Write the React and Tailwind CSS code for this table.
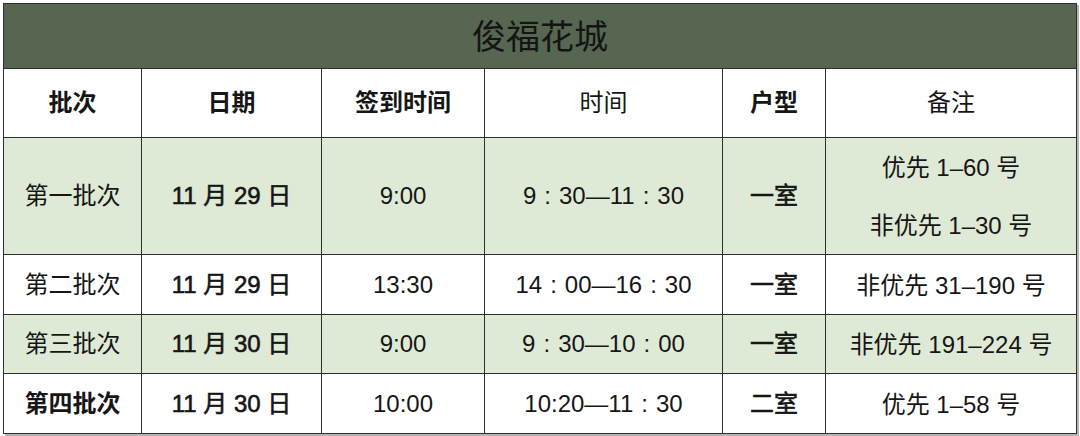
const rows = [
  {
    batch: "第一批次",
    date: "11 月 29 日",
    checkin: "9:00",
    time: "9：30—11：30",
    room: "一室",
    note: ["优先 1–60 号", "非优先 1–30 号"],
    green: true,
    h: "h-[117px]",
  },
  {
    batch: "第二批次",
    date: "11 月 29 日",
    checkin: "13:30",
    time: "14：00—16：30",
    room: "一室",
    note: ["非优先 31–190 号"],
    h: "h-[60px]",
  },
  {
    batch: "第三批次",
    date: "11 月 30 日",
    checkin: "9:00",
    time: "9：30—10：00",
    room: "一室",
    note: ["非优先 191–224 号"],
    green: true,
    h: "h-[59px]",
  },
  {
    batch: "第四批次",
    date: "11 月 30 日",
    checkin: "10:00",
    time: "10:20—11：30",
    room: "二室",
    note: ["优先 1–58 号"],
    bold: true,
    h: "h-[60px]",
  },
];

const cell = "border border-[#2e2e2e] text-center align-middle p-0";
const medium = "[-webkit-text-stroke:0.6px_#161616]";

// full-width colon drawn as a spaced-out ascii colon
const TimeText = ({ text }) => {
  const parts = text.split("：");
  return (
    <>
      {parts.map((p, i) => (
        <span key={i}>
          {i > 0 && <span className="mx-[8px]">:</span>}
          {p}
        </span>
      ))}
    </>
  );
};

export default function App() {
  return (
    <div
      className="w-[1080px] h-[436px] bg-white pt-[3px] pl-[3px] text-[#161616]"
      style={{ fontFamily: '"Liberation Sans", "Noto Sans CJK SC", sans-serif' }}
    >
      <table className="border-collapse table-fixed w-[1073px] shadow-[2px_2px_0_#b4b4b4] text-[24px] leading-none">
        <colgroup>
          <col className="w-[138px]" />
          <col className="w-[180px]" />
          <col className="w-[163px]" />
          <col className="w-[238px]" />
          <col className="w-[103px]" />
          <col className="w-[251px]" />
        </colgroup>
        <tbody>
          <tr className="h-[65px] bg-[#566650]">
            <td colSpan={6} className={`${cell} text-[34px] text-[#141414] pt-[2px]`}>
              俊福花城
            </td>
          </tr>
          <tr className="h-[69px] bg-white font-bold">
            <td className={cell}>批次</td>
            <td className={cell}>日期</td>
            <td className={cell}>签到时间</td>
            <td className={`${cell} font-normal`}>时间</td>
            <td className={cell}>户型</td>
            <td className={`${cell} font-normal`}>备注</td>
          </tr>
          {rows.map((r) => (
            <tr
              key={r.batch}
              className={`${r.h} ${r.green ? "bg-[#dfead6]" : "bg-white"}`}
            >
              <td className={`${cell} ${r.bold ? "font-bold" : ""}`}>{r.batch}</td>
              <td className={`${cell} ${medium}`}>{r.date}</td>
              <td className={cell}>{r.checkin}</td>
              <td className={cell}>
                <TimeText text={r.time} />
              </td>
              <td className={`${cell} ${medium}`}>{r.room}</td>
              <td className={cell}>
                <div className="flex flex-col items-center gap-[34px] pt-[2px]">
                  {r.note.map((n) => (
                    <span key={n}>{n}</span>
                  ))}
                </div>
              </td>
            </tr>
          ))}
        </tbody>
      </table>
    </div>
  );
}
